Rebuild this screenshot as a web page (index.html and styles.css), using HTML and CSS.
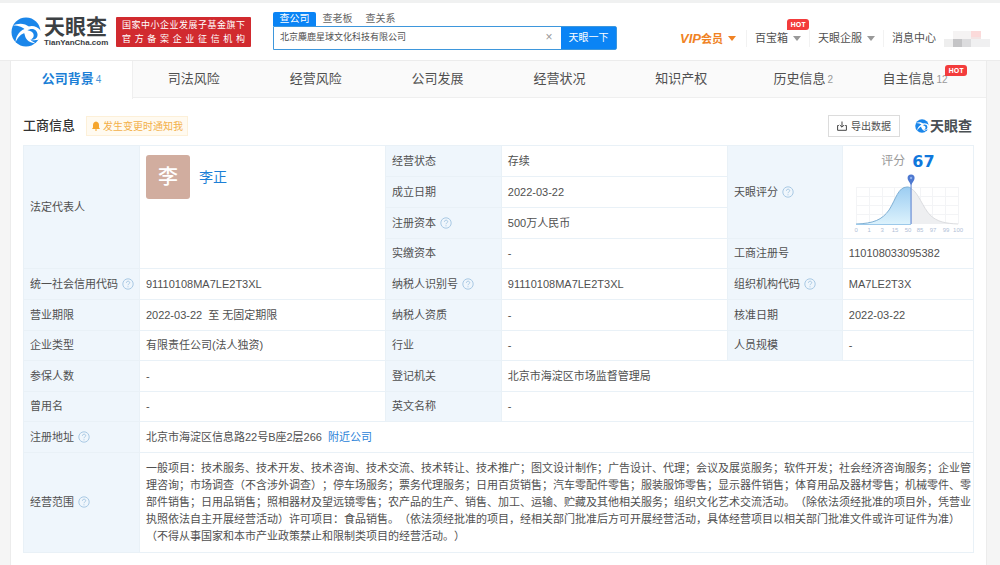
FILE: index.html
```html
<!DOCTYPE html>
<html lang="zh-CN">
<head>
<meta charset="utf-8">
<meta name="viewport" content="width=device-width, initial-scale=1">
<title>天眼查</title>
<link rel="stylesheet" href="styles.css">
</head>
<body>
<svg width="0" height="0" class="defs" aria-hidden="true">
  <defs>
    <symbol id="mark" viewBox="0 0 30 30">
      <circle cx="15" cy="15" r="14.5" fill="#1a86ea"/>
      <path d="M15 11C19 7.500 26 8.500 30 14L30 21C28.500 22.500 27 23 25 23C20 24.500 15 21 13.500 16.500C13 14.500 13.500 12.500 15 11Z" fill="#fff"/>
      <path d="M16.500 13.500C20 10.500 26 12 26.500 17C27 20.500 24 23.500 20 22.500C23 21 23.500 17.500 21.500 15.500C20 14 18 13.500 16.500 13.500Z" fill="#1a86ea"/>
      <path d="M19 10.500C13 5.500 7 6.500 2 8.500C8 8.500 12 10 15 13.500Z" fill="#fff"/>
      <path d="M16 11C9 13 5 18 4.500 25.500C7 20 10 17 14.500 15.500Z" fill="#fff"/>
      <path d="M13.500 14C13 21 17 26 25 26.500C20 24 17 21 16.500 16Z" fill="#fff"/>
    </symbol>
    <symbol id="help" viewBox="0 0 12 12">
      <circle cx="6" cy="6" r="5.200" fill="none" stroke="#a9c9e4"/>
      <path d="M4.400 4.800C4.400 2.600 7.700 2.700 7.700 4.700C7.700 5.900 6 5.900 6 7.200M6 8.300V9.300" fill="none" stroke="#a9c9e4"/>
    </symbol>
  </defs>
</svg>

<header class="header">
  <a class="logo" href="#">
    <svg class="logo-mark"><use href="#mark"/></svg>
    <span class="logo-text"><strong>天眼查</strong><small>TianYanCha.com</small></span>
  </a>
  <div class="slogan"><span>国家中小企业发展子基金旗下</span><span>官方备案企业征信机构</span></div>
  <form class="search">
    <div class="search-tabs">
      <button type="button" class="search-tab on">查公司</button>
      <button type="button" class="search-tab">查老板</button>
      <button type="button" class="search-tab">查关系</button>
    </div>
    <div class="search-row">
      <input class="search-input" type="text" aria-label="公司名称" value="北京麋鹿星球文化科技有限公司">
      <button type="button" class="search-clear" aria-label="清除">×</button>
      <button type="submit" class="search-go">天眼一下</button>
    </div>
  </form>
  <nav class="links">
    <a class="link vip" href="#"><span><i>VIP</i>会员</span><b class="caret"></b></a>
    <a class="link" href="#">百宝箱<b class="caret"></b><em class="hot">HOT</em></a>
    <a class="link" href="#">天眼企服<b class="caret"></b></a>
    <a class="link" href="#">消息中心</a>
    <svg class="user" viewBox="0 0 46 18" aria-hidden="true">
      <path d="M0 9H9V17H0Z" fill="#eee"/><path d="M9 9H18V17H9Z" fill="#c4c4c6"/><path d="M18 9H27V17H18Z" fill="#dcdcde"/><path d="M27 9H46V17H27Z" fill="#f0f0f1"/><path d="M9 1H27V9H9Z" fill="#f5f3f3"/><path d="M27 1H37V7H27Z" fill="#fbdada"/><path d="M27 7H37V9H27Z" fill="#f3e4e4"/>
    </svg>
  </nav>
</header>

<main class="page">
  <nav class="tabs">
    <a class="tab on" href="#">公司背景<small>4</small></a>
    <a class="tab" href="#">司法风险</a>
    <a class="tab" href="#">经营风险</a>
    <a class="tab" href="#">公司发展</a>
    <a class="tab" href="#">经营状况</a>
    <a class="tab" href="#">知识产权</a>
    <a class="tab" href="#">历史信息<small>2</small></a>
    <a class="tab has-hot" href="#">自主信息<small>12</small><em class="hot">HOT</em></a>
  </nav>

  <section class="content">
    <div class="title-bar">
      <h2>工商信息</h2>
      <button type="button" class="notify">
        <svg width="10" height="10" viewBox="0 0 10 10"><path d="M5 0.500C3 0.800 2 2.200 2 4V6.500L1 8H9L8 6.500V4C8 2.200 7 0.800 5 0.500ZM4 8.500H6V9.500H4Z" fill="#f5a52c"/></svg>
        发生变更时通知我
      </button>
      <button type="button" class="export">
        <svg width="10" height="10" viewBox="0 0 10 10"><path d="M5 0.500V6M2.800 4L5 6.200L7.200 4M1.800 4.500H0.600V9.300H9.400V4.500H8.200" fill="none" stroke="#444"/></svg>
        导出数据
      </button>
      <div class="brand"><svg class="brand-mark"><use href="#mark"/></svg>天眼查</div>
    </div>

    <table class="info">
      <colgroup><col class="c1"><col class="c2"><col class="c3"><col class="c4"><col class="c5"><col class="c6"></colgroup>
      <tbody>
      <tr>
        <th rowspan="4">法定代表人</th>
        <td rowspan="4" class="top"><div class="person"><span class="avatar">李</span><a href="#">李正</a></div></td>
        <th>经营状态</th><td>存续</td>
        <th rowspan="3">天眼评分<svg class="help"><use href="#help"/></svg></th>
        <td rowspan="3" class="score">
          <div class="score-line">评分<strong>67</strong></div>
          <svg class="chart" viewBox="0 0 120 60" role="img" aria-label="评分 67">
            <defs><linearGradient id="fill" x1="0" y1="0" x2="0" y2="1"><stop offset="0" stop-color="#9ccdf2"/><stop offset="1" stop-color="#dcf2fc"/></linearGradient></defs>
            <path d="M8.500 14.500H110.500M8.500 23.500H110.500M8.500 32.500H110.500M8.500 41.500H110.500M8.500 14V51M21.500 14V51M34.500 14V51M46.500 14V51M59.500 14V51M72.500 14V51M84.500 14V51M97.500 14V51M110.500 14V51" stroke="#f3f4f6" fill="none"/>
            <path d="M63 15.500C70 19 75 35 82 42C89 49 98 50.500 110 51H63Z" fill="#eeeff1"/>
            <path d="M63 15.500C70 19 75 35 82 42C89 49 98 50.500 110 51" fill="none" stroke="#dcdde0"/>
            <path d="M8 51C25 50.500 34 47 41 37C48 26 50 14 59 14C61 14 62 14.500 63 15.500V51Z" fill="url(#fill)"/>
            <path d="M8 51C25 50.500 34 47 41 37C48 26 50 14 59 14C61 14 62 14.500 63 15.500" fill="none" stroke="#80b0d4"/>
            <path d="M8 51.500H63" stroke="#9cc9ea"/>
            <path d="M63 10V51" stroke="#6c8fd6" stroke-width="1.200"/>
            <path d="M63 12C61 8.500 59.500 7 59.500 5A3.500 3.500 0 0 1 66.500 5C66.500 7 65 8.500 63 12Z" fill="#4d78d0"/>
            <circle cx="63" cy="5" r="1.200" fill="#8fb0ec"/>
            <g class="axis"><text x="8" y="59">0</text><text x="21" y="59">1</text><text x="34" y="59">3</text><text x="47" y="59">15</text><text x="60" y="59">50</text><text x="72" y="59">85</text><text x="85" y="59">97</text><text x="98" y="59">99</text><text x="110" y="59">100</text></g>
          </svg>
        </td>
      </tr>
      <tr><th>成立日期</th><td>2022-03-22</td></tr>
      <tr><th>注册资本<svg class="help"><use href="#help"/></svg></th><td>500万人民币</td></tr>
      <tr class="compact"><th>实缴资本</th><td>-</td><th>工商注册号</th><td>110108033095382</td></tr>
      <tr><th>统一社会信用代码<svg class="help"><use href="#help"/></svg></th><td>91110108MA7LE2T3XL</td><th>纳税人识别号<svg class="help"><use href="#help"/></svg></th><td>91110108MA7LE2T3XL</td><th>组织机构代码<svg class="help"><use href="#help"/></svg></th><td>MA7LE2T3X</td></tr>
      <tr><th>营业期限</th><td>2022-03-22&nbsp; 至 无固定期限</td><th>纳税人资质</th><td>-</td><th>核准日期</th><td>2022-03-22</td></tr>
      <tr class="compact"><th>企业类型</th><td>有限责任公司(法人独资)</td><th>行业</th><td>-</td><th>人员规模</th><td>-</td></tr>
      <tr><th>参保人数</th><td>-</td><th>登记机关</th><td colspan="3">北京市海淀区市场监督管理局</td></tr>
      <tr class="compact"><th>曾用名</th><td>-</td><th>英文名称</th><td colspan="3">-</td></tr>
      <tr><th>注册地址<svg class="help"><use href="#help"/></svg></th><td colspan="5">北京市海淀区信息路22号B座2层266<a class="near" href="#">附近公司</a></td></tr>
      <tr><th>经营范围<svg class="help"><use href="#help"/></svg></th><td colspan="5" class="scope">一般项目：技术服务、技术开发、技术咨询、技术交流、技术转让、技术推广；图文设计制作；广告设计、代理；会议及展览服务；软件开发；社会经济咨询服务；企业管理咨询；市场调查（不含涉外调查）；停车场服务；票务代理服务；日用百货销售；汽车零配件零售；服装服饰零售；显示器件销售；体育用品及器材零售；机械零件、零部件销售；日用品销售；照相器材及望远镜零售；农产品的生产、销售、加工、运输、贮藏及其他相关服务；组织文化艺术交流活动。（除依法须经批准的项目外，凭营业执照依法自主开展经营活动）许可项目：食品销售。（依法须经批准的项目，经相关部门批准后方可开展经营活动，具体经营项目以相关部门批准文件或许可证件为准）（不得从事国家和本市产业政策禁止和限制类项目的经营活动。）</td></tr>
      </tbody>
    </table>
  </section>
</main>
</body>
</html>
```
FILE: styles.css
```css
* { box-sizing: border-box; }

body {
  margin: 0;
  background: #f5f5f5;
  color: #505050;
  font: 11px/17px "Liberation Sans", "Noto Sans CJK SC", sans-serif;
  text-spacing-trim: space-all;
}

a { color: inherit; text-decoration: none; }
button, input { font: inherit; color: inherit; margin: 0; padding: 0; border: 0; background: none; }
.defs { position: absolute; }

/* Header */
.header {
  display: flex;
  align-items: center;
  height: 61px;
  padding: 0 10px 0 11px;
  background: #fff;
  border-top: 3px solid #f0f1f1;
  border-bottom: 1px solid #ececec;
}

.logo { display: flex; align-items: center; gap: 3px; width: 105px; }
.logo-mark { width: 30px; height: 30px; flex: none; }
.logo-text { display: flex; flex-direction: column; color: #3c4043; }
.logo-text strong { font-size: 21px; line-height: 22px; font-weight: 700; }
.logo-text small { font-size: 8px; line-height: 9px; font-weight: 700; }

.slogan {
  width: 135px;
  padding: 1px 6px;
  border-radius: 1px;
  background: #d12a2f;
  color: #fff;
  font-size: 9px;
  line-height: 14px;
}
.slogan span { display: block; text-align-last: justify; white-space: nowrap; }

.search { width: 344px; margin-left: 22px; padding-bottom: 2px; }
.search-tabs { display: flex; height: 14px; }
.search-tab { width: 43px; color: #666; font-size: 10px; line-height: 14px; border-radius: 2px 2px 0 0; }
.search-tab.on { background: #0a84f5; color: #fff; }
.search-row { display: flex; height: 24px; border: 1px solid #3e97dc; border-radius: 0 2px 2px 0; }
.search-input { flex: 1; min-width: 0; padding-left: 6px; font-size: 9px; outline: 0; }
.search-clear { width: 24px; color: #999; font-size: 12px; }
.search-go { width: 55px; background: #0a84f5; color: #fff; font-size: 10px; }

.links { display: flex; align-items: center; margin-left: auto; padding-top: 14px; }
.link { position: relative; display: flex; align-items: center; gap: 5px; padding: 0 8px; }
.link + .link { border-left: 1px solid #f2f2f2; }
.link.vip { padding-right: 10px; color: #f08223; font-weight: 700; }
.link.vip i { font-size: 13px; }
.caret { border: 4px solid transparent; border-top: 5px solid #999; border-bottom: 0; }
.vip .caret { border-top-color: #f08223; }
.hot {
  position: absolute;
  width: 22px;
  border-radius: 3px 3px 3px 0;
  background: #f33c3c;
  color: #fff;
  font: 700 7px/11px "Open Sans", sans-serif;
  text-align: center;
}
.link .hot { left: 40px; top: -11px; }
.user { width: 46px; height: 18px; }

/* Page */
.page { margin: 0 13px 0 10px; background: #fff; border: solid #ececec; border-width: 0 1px; }

.tabs { display: grid; grid-template-columns: repeat(8, 1fr); height: 37px; background: #fafafa; border-bottom: 1px solid #efefef; }
.tab { position: relative; display: flex; align-items: baseline; justify-content: center; gap: 2px; font-size: 13px; line-height: 36px; }
.tab small { font-size: 10px; color: #999; }
.tab.on { margin-bottom: -1px; background: #fff; border-right: 1px solid #efefef; color: #1c7fd6; font-weight: 700; }
.tab.on small { color: #4b96d8; font-weight: 400; }
.tab.has-hot { padding-right: 20px; }
.tab .hot { right: 19px; top: 4px; }

.content { padding: 17px 12px 16px; }

.title-bar { display: flex; align-items: center; height: 22px; margin-bottom: 8px; }
.title-bar h2 { margin: 0 11px 0 0; font-size: 13px; line-height: 20px; color: #333; font-weight: 500; }
.notify { display: flex; align-items: center; gap: 2px; height: 20px; padding: 0 4px; background: #fffaf0; border: 1px solid #fdf0d8; color: #f3b04a; font-size: 10px; }
.export { display: flex; align-items: center; justify-content: center; gap: 4px; width: 72px; height: 22px; margin-left: auto; border: 1px solid #dcdcdc; font-size: 10px; }
.brand { display: flex; align-items: center; gap: 1px; margin: 0 2px 0 15px; color: #4a5054; font-size: 14px; font-weight: 700; }
.brand-mark { width: 14px; height: 14px; }

/* Table */
.info { width: 100%; table-layout: fixed; border-collapse: collapse; }
.c1, .c3 { width: 12.2%; }
.c2 { width: 25.9%; }
.c4 { width: 23.8%; }
.c5 { width: 12.1%; }
.info tr { height: 31px; }
.info .compact { height: 30px; }
.info th, .info td { padding: 0 2px 0 6px; border: 1px solid #e9f1f7; text-align: left; font-weight: 400; }
.info th { background: #eff6fc; }
.help { width: 12px; height: 12px; margin-left: 4px; vertical-align: -2px; }
.info .top { padding-top: 9px; vertical-align: top; }
.person { display: flex; align-items: center; gap: 9px; color: #1c7fd6; font-size: 14px; }
.avatar { width: 44px; border-radius: 3px; background: #d1ad9f; color: #fff; font-size: 20px; line-height: 44px; font-weight: 500; text-align: center; }
.near { margin-left: 6px; color: #2a82d8; }
.info .scope { padding-top: 7px; padding-bottom: 7px; }

.info .score { padding: 4px 5px 0; text-align: center; vertical-align: top; }
.score-line { display: flex; align-items: center; justify-content: center; gap: 7px; height: 23px; color: #999; font-size: 12px; }
.score-line strong { color: #0f78dc; font: 700 16px/20px "DejaVu Sans", sans-serif; }
.chart { display: block; width: 100%; height: 60px; }
.axis { fill: #b0c0d6; font-size: 6px; text-anchor: middle; }
```
